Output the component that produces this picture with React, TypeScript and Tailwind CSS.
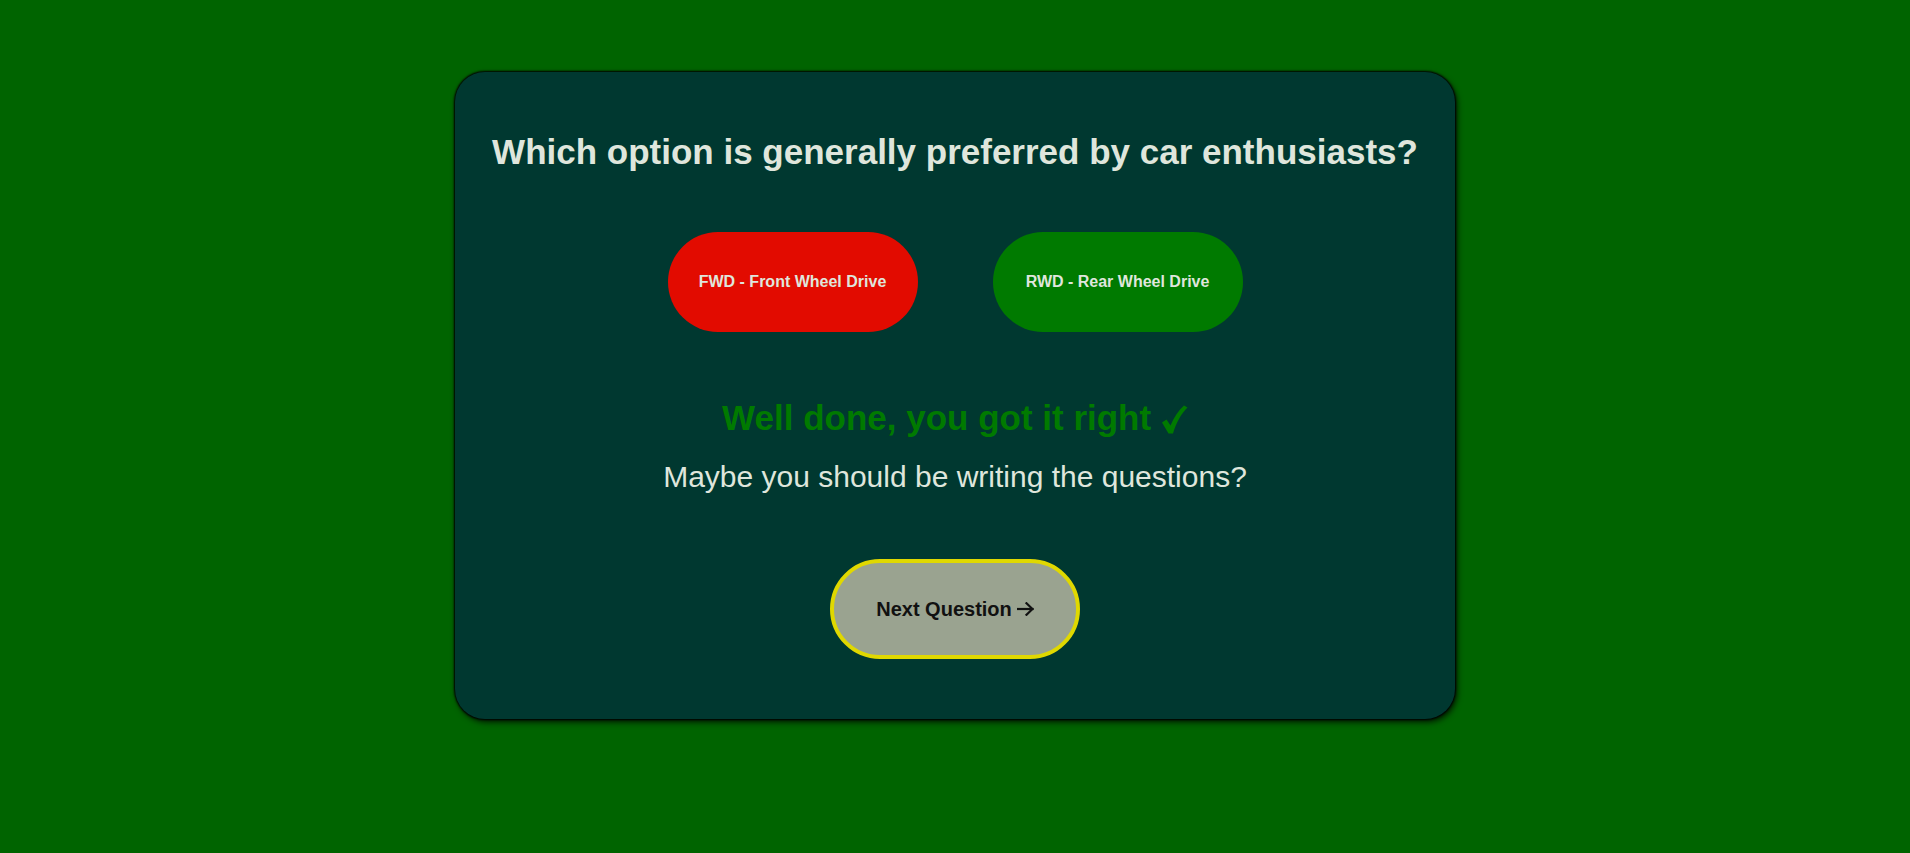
import React from "react";

export default function App() {
  return (
    <div
      className="min-h-screen w-full bg-[#006400] pt-[72px]"
      style={{ fontFamily: '"Liberation Sans", Arial, sans-serif' }}
    >
      <div className="mx-auto flex h-[647px] w-[1000px] flex-col items-center rounded-[30px] bg-[#003830] pt-[60px] pb-[60px] shadow-[0_0_2px_1px_#000,2px_3px_6px_rgba(0,0,0,0.8)]">
        <h1 className="text-[35px] font-bold leading-[40px] text-[#dfe6dc]">
          Which option is generally preferred by car enthusiasts?
        </h1>
        <div className="mt-[60px] flex gap-[75px]">
          <button className="flex h-[100px] w-[250px] items-center justify-center rounded-full bg-[#e20b00] text-[16px] font-bold text-[#dfe6dc]">
            FWD - Front Wheel Drive
          </button>
          <button className="flex h-[100px] w-[250px] items-center justify-center rounded-full bg-[#007a00] text-[16px] font-bold text-[#dfe6dc]">
            RWD - Rear Wheel Drive
          </button>
        </div>
        <div className="mt-[66px] h-[40px] text-[35px] font-bold leading-[40px] text-[#007a00]">
          Well done, you got it right{" "}
          <svg
            className="inline-block align-[-4px]"
            width="27"
            height="30"
            viewBox="0 0 27 30"
            fill="none"
          >
            <path
              d="M1 18.5 L5.5 15.5 L9.5 21.5 C13 13 17.5 6.5 23 1.5 L26.5 3.5 C20 10 15.5 18 12 29.5 L7.5 29.5 Z"
              fill="#007a00"
            />
          </svg>
        </div>
        <div className="mt-[22px] text-[30px] leading-[34px] text-[#dfe6dc]">
          Maybe you should be writing the questions?
        </div>
        <button className="mt-[65px] flex h-[100px] w-[250px] items-center justify-center rounded-full border-4 border-[#e0d800] bg-[#9aa390] text-[20px] font-bold text-[#111111]">
          Next Question
          <svg
            className="ml-[5px]"
            width="17"
            height="14"
            viewBox="0 0 17 14"
            fill="none"
            stroke="#111111"
            strokeWidth="2.2"
            strokeLinecap="square"
          >
            <path d="M1 7H15.5" />
            <path d="M9.5 1.2L15.5 7L9.5 12.8" />
          </svg>
        </button>
      </div>
    </div>
  );
}
